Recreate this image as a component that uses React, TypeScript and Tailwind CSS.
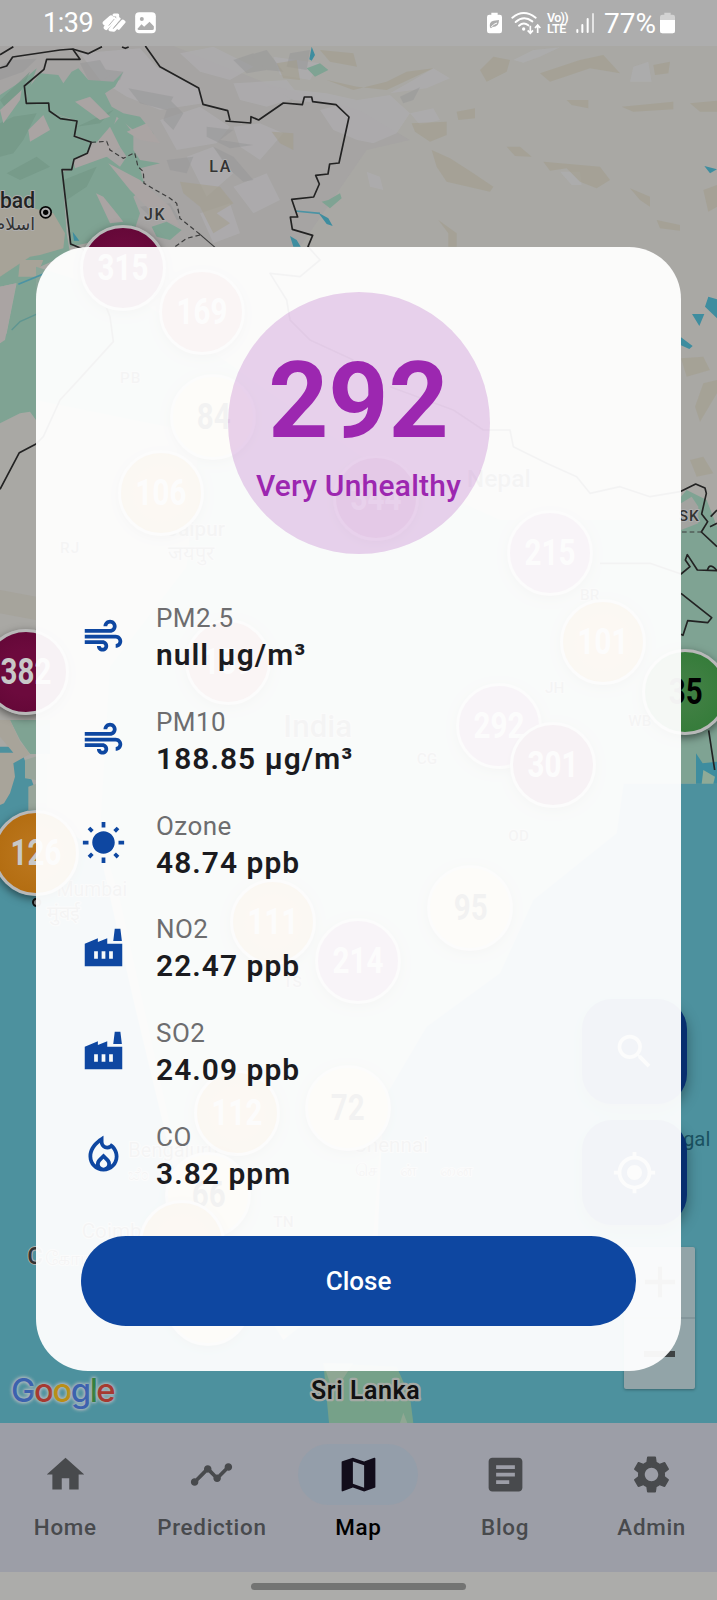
import React from "react";
import {
  MdHome, MdTimeline, MdMap, MdArticle, MdSettings, MdAir, MdWbSunny, MdFactory, MdSearch, MdMyLocation, MdAdd,
} from "react-icons/md";

type Pin = { x: number; y: number; value: string; tone: string };

const MAROON = "bg-[radial-gradient(circle,#6c0a3d_40%,#5f0634)] text-[#c8c8c8]";
const RED = "bg-[#9c3a3a] text-[#c8c8c8]";
const PURPLE = "bg-[#7c2a78] text-[#c8c8c8]";
const ORANGE = "bg-[radial-gradient(circle,#b9741a_30%,#b0690c)] text-[#c8c8c8]";
const YELLOW = "bg-[#d0bc82] text-black";
const GREEN = "bg-[radial-gradient(circle,#3f7f42_30%,#2f7a35)] text-black";

const pins: Pin[] = [
  { x: 122.7, y: 267.7, value: "315", tone: MAROON },
  { x: 202.3, y: 311.7, value: "169", tone: RED },
  { x: 213.3, y: 417, value: "84", tone: YELLOW },
  { x: 160.7, y: 493.3, value: "106", tone: ORANGE },
  { x: 376, y: 497.7, value: "344", tone: MAROON },
  { x: 550.3, y: 553.3, value: "215", tone: PURPLE },
  { x: 228.3, y: 661.7, value: "159", tone: RED },
  { x: 603, y: 641.7, value: "101", tone: ORANGE },
  { x: 26, y: 672, value: "382", tone: MAROON },
  { x: 499.3, y: 726, value: "292", tone: PURPLE },
  { x: 553, y: 765, value: "301", tone: MAROON },
  { x: 685.3, y: 692, value: "35", tone: GREEN },
  { x: 36, y: 853, value: "126", tone: ORANGE },
  { x: 470.3, y: 908.3, value: "95", tone: YELLOW },
  { x: 273.3, y: 921.7, value: "111", tone: ORANGE },
  { x: 358.3, y: 961, value: "214", tone: PURPLE },
  { x: 236.7, y: 1113.3, value: "112", tone: ORANGE },
  { x: 347.7, y: 1108, value: "72", tone: YELLOW },
  { x: 208.3, y: 1195, value: "66", tone: YELLOW },
  { x: 181.7, y: 1243, value: "", tone: ORANGE },
  { x: 208.3, y: 1303, value: "", tone: YELLOW },
];

function StatusBar() {
  return (
    <header className="flex h-[46px] shrink-0 items-center justify-between bg-[#adadad] pl-[43px] pr-[42px] text-white">
      <div className="flex items-center">
        <span className="w-[59px] pt-px text-[27px] leading-none tracking-[-0.5px]">1:39</span>
        <svg className="h-[22px] w-[24px]" viewBox="0 0 72 66" fill="none" stroke="#fff" strokeLinecap="round" strokeLinejoin="round">
          <path d="M9 33 27 17M12 47 36 22" strokeWidth="14" />
          <path d="M36 9 47 9 47 22 24 53 36 55 62 27 66 30 50 49" strokeWidth="9" />
          <path d="M30 46 52 20" strokeWidth="8" />
          <path d="M21 40 36 22" strokeWidth="2.5" stroke="#adadad" />
          <path d="M35 48 51 29" strokeWidth="2.5" stroke="#adadad" />
        </svg>
        <svg className="ml-[9px] h-[22px] w-[21px]" viewBox="0 0 62 66">
          <rect y="1" width="62" height="63" rx="12" fill="#fff" />
          <circle cx="20" cy="21" r="6" fill="#adadad" />
          <path d="M7 50 L19 37 L27 44 L43 29 L56 43 V50 Q56 54 51 54 H12 Q7 54 7 50Z" fill="#adadad" />
        </svg>
      </div>
      <div className="flex items-center">
        <svg className="h-[22px] w-[15px]" viewBox="0 0 45 66">
          <path d="M13 2h19v6h6q7 0 7 7v42q0 7-7 7H7q-7 0-7-7V15q0-7 7-7h6z" fill="#fff" />
          <path d="M9 47 Q5 29 20 26 L36 24 Q36 45 17 45 L12 49Z" fill="#adadad" />
          <path d="M12 46 Q20 35 30 33" stroke="#fff" strokeWidth="3" fill="none" />
        </svg>
        <svg className="ml-[9px] h-[24px] w-[31px]" viewBox="0 0 93 72" fill="none" stroke="#fff">
          <path d="M4 20 Q38 -8 74 20" strokeWidth="6" strokeLinecap="round" />
          <path d="M14 33 Q38 12 64 31" strokeWidth="6" strokeLinecap="round" />
          <path d="M24 44 Q38 32 52 43" strokeWidth="6" strokeLinecap="round" />
          <circle cx="38" cy="54" r="5" fill="#fff" stroke="none" />
          <path d="M58 44V66M50 58l8 9 8-9M80 66V42M72 51l8-9 8 9" strokeWidth="5" />
        </svg>
        <div className="ml-[5px] flex w-[22px] flex-col text-[12.5px] font-semibold leading-[11.5px]">
          <span className="whitespace-nowrap tracking-[-0.7px]">Vo))</span>
          <span className="tracking-[-0.4px]">LTE</span>
        </div>
        <svg className="ml-[7px] h-[22px] w-[19px]" viewBox="0 0 57 66" stroke="#fff" strokeWidth="6" strokeLinecap="round">
          <path d="M4 54V60M19 39V60M35 21V60" />
          <path d="M51 6V60" stroke="#e4e4e4" />
        </svg>
        <span className="ml-[9px] w-[56px] pt-px text-[28px] leading-none">77%</span>
        <svg className="h-[22px] w-[15px]" viewBox="0 0 45 66">
          <path d="M13 2h19v6h6q7 0 7 7v42q0 7-7 7H7q-7 0-7-7V15q0-7 7-7h6z" fill="#d2d2d2" />
          <path d="M0 24h45v33q0 7-7 7H7q-7 0-7-7z" fill="#fff" />
        </svg>
      </div>
    </header>
  );
}

function Terrain() {
  return (
    <svg className="absolute inset-0 h-full w-full" viewBox="0 138 2151 4131" preserveAspectRatio="none">
      <rect x="0" y="138" width="2151" height="4131" fill="#a9a8a4" />
      {/* high plateau greys */}
      <g fill="#a6a4a3">
        <path d="M0 138H520L800 250 1080 330 1230 420 1100 450 900 740H400L0 600Z" />
      </g>
      <g fill="#aeadaf" opacity=".75">
        <path d="M240 160 420 145 470 200 600 265 610 310 480 330 380 290 300 240Z" />
        <path d="M540 160 640 140 760 200 690 240 600 215ZM700 250 860 240 900 290 800 320 720 300Z" />
        <path d="M480 360 600 320 690 380 650 430 530 450ZM560 470 640 440 700 520 620 590ZM700 560 800 520 840 600 760 640Z" />
        <path d="M1071 300 1170 285 1230 340 1190 400 1120 430 1071 420 1000 390 960 330ZM1240 240 1300 205 1350 235 1280 265 1170 280ZM1230 340 1300 325 1320 360 1260 375Z" />
        <path d="M820 170 960 190 930 240 840 225ZM700 380 780 370 850 400 780 480 720 440ZM600 640 690 610 720 700 640 730Z" />
        <path d="M1900 200 1945 185 1955 245 1890 245ZM1680 515 1740 515 1745 555 1715 555ZM1100 515 1140 530 1150 570 1110 560ZM1540 180 1600 150 1680 142 1620 170 1570 188Z" />
        <path d="M800 260 980 280 1071 300 1040 320 880 300Z" />
      </g>
      <g fill="#989899" opacity=".55">
        <path d="M250 200 370 215 360 240 280 262ZM385 265 520 290 500 330 420 310ZM620 380 700 390 660 420 760 435 690 445 620 410Z" />
        <path d="M510 300 550 340 520 390 490 360ZM640 440 700 470 760 540 730 545 680 500ZM700 180 760 160 800 210 740 220ZM1200 290 1260 262 1240 300 1210 310Z" />
        <path d="M500 480 580 470 560 520 510 510ZM420 620 510 610 540 660 460 660ZM870 160 930 150 920 210 860 200ZM240 190 300 180 330 230 270 250Z" />
        <path d="M30 180 110 176 70 215 0 240V200ZM750 165 800 150 850 215 800 210Z" />
      </g>
      <g fill="#a39e8d" opacity=".6">
        <path d="M540 545 660 560 700 610 650 640 690 670 640 700 600 620 550 580ZM815 395 880 400 880 450 840 430ZM830 190 890 180 900 240 850 235Z" />
        <path d="M960 150 1060 160 1071 200 990 185ZM980 240 1071 260 1160 270 1300 205 1220 215 1160 245 1060 270Z" />
        <path d="M1440 210 1480 170 1530 180 1520 215 1460 245ZM1620 220 1740 180 1810 165 1860 220 1770 205 1650 245ZM1960 195 2010 185 2005 220 1965 225Z" />
        <path d="M1370 335 1425 325 1425 355 1375 360ZM1235 370 1340 365 1340 405 1290 425 1245 395ZM1700 300 1765 300 1765 325 1715 315ZM1865 320 2020 305 2020 328 1900 335ZM2070 310 2151 302V335H2100Z" />
        <path d="M1295 450 1350 475 1420 520 1480 560 1470 575 1340 545 1310 500ZM1520 440 1560 440 1595 470 1545 468ZM1630 485 1800 500 1830 540 1790 565 1740 545 1700 505 1650 512ZM1890 565 1950 590 1950 620 1920 600ZM1970 660 2040 675 2040 692 1980 685ZM1315 660 1370 700 1370 740H1345V700ZM2110 570 2151 555V620L2125 635Z" />
        <path d="M2043 1075 2110 1070 2130 1110 2060 1130ZM2110 1150 2151 1140V1180L2100 1265 2085 1220ZM2070 1380 2110 1370 2140 1420 2090 1430Z" />
      </g>
      {/* vegetation */}
      <g fill="#7fa393">
        <path d="M0 285 70 240 110 205 80 290 80 310 146 312 150 335 230 365 225 410 274 430 262 460 220 480 215 510 186 510 200 700 210 760 120 800 108 900V1260L90 1235 60 1240 0 1270V1030L20 1000 50 850 0 860V640L0 400Z" />
        <path d="M120 220 175 225 190 250 215 215 235 205 265 240 340 245 370 215 345 260 315 280 335 320 370 340 420 350 460 400 465 420 400 390 350 350 330 410 290 430 274 427 225 405 231 363 150 335 146 309 79 310 85 265Z" />
        <path d="M320 400 360 350 400 400 400 450 420 480 480 490 420 505 435 560 400 590 420 640 400 700 210 740 186 515 215 509 225 480 320 470 360 500 380 470 360 440Z" />
        <path d="M455 680 500 665 545 690 510 720 470 710ZM920 205 960 190 985 210 945 230ZM965 605 985 600 1020 580 1025 595 990 625Z" />
      </g>
      <g fill="#749786" opacity=".7">
        <path d="M0 370 40 350 110 340 70 420 40 460 0 470ZM190 540 290 500 260 560 200 600ZM20 520 110 470 150 500 60 540ZM230 380 340 330 300 370ZM0 300 90 215 70 260 20 330Z" />
      </g>
      <g fill="#aaa4a3">
        <path d="M85 390 130 345 150 390 90 425ZM225 305 270 290 330 350 300 360ZM0 330 65 270 60 300 10 370ZM325 490 420 540 510 620 540 680 470 650 390 570ZM288 580 310 590 350 640 370 665 330 670ZM220 480 262 460 330 380 360 440 320 470 225 505Z" />
        <path d="M380 395 440 370 480 430 420 420Z" />
      </g>
      <path d="M0 600 160 640 195 700 190 745 120 765 90 770 0 830Z" fill="#a7a398" />
      <path d="M60 780 130 780 110 830 55 830Z" fill="#a7a398" />
      <path d="M0 860 48 850 15 1020 0 1030Z" fill="#aaa4a3" />
      {/* southern plains beneath the dialog */}
      <path d="M108 800 420 900 700 1100 1100 1380 1500 1560 2043 1560V2351H1871L1850 2500 1600 2700 1500 2920 1280 3080 1150 3300 1120 3700 900 4020 780 3980 560 3600 360 2700 300 2500 330 2000 560 1700 600 1300 108 1200Z" fill="#8aa598" />
      <path d="M2043 1490 2060 1470 2120 1500 2151 1580V2351H2043Z" fill="#7fa393" />
      <path d="M2043 1510 2075 1490 2095 1520 2095 1570 2043 1590Z" fill="#a3a3a0" />
      {/* water */}
      <path d="M0 2240H60L130 2440 300 2560 400 3000 520 3500 850 4020 1130 3800 1150 3300 1280 3080 1500 2920 1600 2700 1850 2500 1871 2351H2151V4269H0Z" fill="#4d919e" />
      <path d="M30 2160H150V2262H90L60 2220Z" fill="#7fa393" />
      <path d="M0 2160H30L60 2225 90 2262 40 2290 45 2330 30 2380 12 2410 0 2415V2258H40L0 2210Z" fill="#a8a49a" />
      <path d="M75 2280 140 2260V2345L75 2335ZM85 2360 140 2340V2430H85Z" fill="#98a59a" />
      <path d="M0 1770V1840L108 1860V1790Z" fill="#a39f93" opacity=".5" />
      <path d="M2088 2260 2108 2290 2151 2285V2351H2088ZM2115 920 2125 890 2151 898V955ZM2076 942 2113 942 2098 978ZM2043 1012 2078 1038 2068 1047 2043 1036ZM2113 498 2151 508 2130 520ZM935 140 945 165 935 182 928 178ZM955 638 985 655 998 678 980 672ZM870 708 890 720 902 740H880ZM218 695 238 722H222Z" fill="#3e8d9f" />
      <path d="M2110 2310 2145 2330 2140 2351H2105Z" fill="#8faa97" />
      <path d="M55 853 130 822M885 633 960 640" stroke="#4b93a4" strokeWidth="5" fill="none" />
      <path d="M35 990 60 965 120 938" stroke="#5f9691" strokeWidth="4" fill="none" />
      <path d="M970 4090 1190 4100 1230 4190 1240 4269H987Z" fill="#76a189" />
      <path d="M970 4090 1060 4090 1000 4180Z" fill="#8fa793" />
      <path d="M1200 4269 1210 4238 1222 4269Z" fill="#8fa793" />
      {/* borders */}
      <g fill="none" stroke="#222" strokeWidth="5" strokeLinejoin="round">
        <path d="M0 204 20 198 38 171 180 150 218 147 240 178 140 178 132 208 73 258 79 310 146 309 148 333 181 356 231 363 223 409 274 427 262 460 222 478 215 509 186 509 212 732 250 748 330 950 340 1025 240 1135 180 1200 130 1310 108 1332 58 1358 0 1468" />
        <path d="M0 164 40 140M218 147 264 161 306 140M366 141 376 145 386 141M436 138 480 200 596 264 609 313 683 332 690 361M676 363 752 369 753 350 776 360 850 309 907 314 913 291 935 291 938 305 1008 314 1047 351 1017 489 989 492 984 522 947 526 958 552 941 591 875 598 893 651 871 651 877 688 938 706 924 740 960 780 900 830 810 820 860 900 870 960 930 1020 1060 1080" />
        <path d="M1170 1160 1360 1230 1450 1290 1530 1290 1540 1340 1640 1390 1730 1430 1770 1480 1860 1460 1950 1490 2040 1475 2087 1452 2115 1464 2119 1480 2105 1542 2123 1565 2104 1596 2151 1640M1800 1690 1950 1690 2043 1722 2070 1700 2056 1680 2062 1664 2092 1710 2151 1712" />
        <path d="M2043 1780 2135 1853 2123 1868 2063 1862 2049 1906 2043 1903M2126 2191 2144 2310M2151 1530 2132 1550M2130 1580 2151 1570" />
        <path d="M2122 1712Q2128 1685 2151 1712" />
      </g>
      <g fill="none" stroke="#3c3c3c" strokeWidth="3.5" strokeDasharray="14 9">
        <path d="M274 427 320 424 330 450 370 475 404 458 414 500 430 515 432 550 510 595 530 610 540 655 600 703M600 705 560 715 525 740M2046 1596H2104" />
        <path d="M600 703 645 742" strokeDasharray="none" />
      </g>
      {/* place names */}
      <g fontFamily="Roboto, sans-serif" fontWeight="500" fill="#333" stroke="#aeaeae" strokeWidth="6" paintOrder="stroke" strokeLinejoin="round">
        <text x="628" y="516" fontSize="48" letterSpacing="5">LA</text>
        <text x="432" y="659" fontSize="48" letterSpacing="5">JK</text>
        <text x="0" y="623" fontSize="64" textLength="105" lengthAdjust="spacingAndGlyphs" fill="#222">bad</text>
        <text x="105" y="690" fontSize="52" fontWeight="400" fontFamily="'DejaVu Sans', sans-serif" direction="rtl">اسلام</text>
        <text x="2036" y="1564" fontSize="46" letterSpacing="3">SK</text>
        <text x="360" y="1150" fontSize="46" letterSpacing="3">PB</text>
        <text x="180" y="1658" fontSize="46" letterSpacing="3">RJ</text>
        <text x="500" y="1608" fontSize="62">Jaipur</text>
        <text x="505" y="1680" fontSize="60" fontWeight="400">जयपुर</text>
        <text x="1400" y="1460" fontSize="74">Nepal</text>
        <text x="850" y="2210" fontSize="94">India</text>
        <text x="1740" y="1800" fontSize="46">BR</text>
        <text x="1635" y="2080" fontSize="46">JH</text>
        <text x="1250" y="2292" fontSize="46">CG</text>
        <text x="1885" y="2178" fontSize="46">WB</text>
        <text x="1525" y="2524" fontSize="46">OD</text>
        <text x="170" y="2688" fontSize="58" fontWeight="400">Mumbai</text>
        <text x="140" y="2760" fontSize="60" fontWeight="400">मुंबई</text>
        <text x="385" y="3470" fontSize="60" fontWeight="400">Bengaluru</text>
        <text x="385" y="3540" fontSize="50" fontWeight="400">ಬೆಂ</text>
        <text x="1060" y="3456" fontSize="62" fontWeight="400">Chennai</text>
        <text x="1065" y="3528" fontSize="52" fontWeight="400" textLength="350">சென்னை</text>
        <text x="245" y="3715" fontSize="62" fontWeight="400">Coimbatore</text>
        <text x="850" y="2960" fontSize="46">TS</text>
        <text x="820" y="3682" fontSize="46">TN</text>
        <text x="82" y="3792" fontSize="72" fontWeight="500">C</text>
        <text x="135" y="3795" fontSize="56" fontWeight="400">கோயம்</text>
      </g>
      <circle cx="137" cy="637" r="16.5" fill="#aeaeae" stroke="#050505" strokeWidth="5" />
      <circle cx="137" cy="637" r="8" fill="#050505" />
      <circle cx="110" cy="2707" r="11" fill="#888" stroke="#111" strokeWidth="6" />
      <text x="2131" y="3438" textAnchor="end" fontFamily="Roboto, sans-serif" fontSize="61" fill="#1a5161">Bengal</text>
      <text x="933" y="4197" fontFamily="Roboto, sans-serif" fontWeight="600" fontSize="75" fill="#111" stroke="#a5aaa5" strokeWidth="14" paintOrder="stroke" strokeLinejoin="round" textLength="326">Sri Lanka</text>
    </svg>
  );
}

function GoogleMark() {
  return (
    <div className="absolute bottom-[11px] left-[11px] font-['Inter',sans-serif] text-[33px] font-medium leading-[44px] tracking-[-1.6px] text-[#3c62ae] [text-shadow:0_0_2px_#a6b6bb,0_0_3px_#a6b6bb,0_0_4px_#a6b6bb,0_0_4px_#a6b6bb]">
      G<span className="text-[#a63a31]">o</span><span className="text-[#b98e17]">o</span>g<span className="text-[#34803f]">l</span><span className="text-[#a63a31]">e</span>
    </div>
  );
}

function MapView() {
  return (
    <main className="relative h-[1377px] shrink-0 overflow-hidden">
      <Terrain />
      <GoogleMark />
      {pins.map((p, i) => (
        <div
          key={i}
          className={`absolute flex size-[86px] -translate-x-1/2 -translate-y-1/2 items-center justify-center rounded-full border-[3px] border-[#b8b8b8] text-[36px] font-bold leading-none shadow-[0_3px_8px_rgba(0,0,0,0.5)] ${p.tone}`}
          style={{ left: p.x, top: p.y - 46 }}
        >
          <span className="scale-x-[0.82]">{p.value}</span>
        </div>
      ))}
      <div className="absolute left-[582px] top-[953px] flex flex-col gap-4">
        {[MdSearch, MdMyLocation].map((Icon, i) => (
          <div key={i} className="flex size-[105px] items-center justify-center rounded-[30px] bg-[#082f6f] text-[#bcbcbc] shadow-[0_6px_14px_rgba(0,0,0,0.35)]">
            <Icon size={45} />
          </div>
        ))}
      </div>
      <div className="absolute left-[624px] top-[1201px] flex h-[142px] w-[71px] flex-col divide-y-2 divide-[#84969b] rounded-[2px] bg-[#92a4a8] text-[#3d4243] shadow-[0_1px_3px_rgba(0,0,0,0.3)]">
        <div className="flex flex-1 items-center justify-center"><MdAdd size={52} /></div>
        <div className="flex flex-1 items-center justify-center">
          <div className="h-[6px] w-[31px] bg-current" />
        </div>
      </div>
    </main>
  );
}

const tabs = [
  { label: "Home", Icon: MdHome },
  { label: "Prediction", Icon: MdTimeline },
  { label: "Map", Icon: MdMap, active: true },
  { label: "Blog", Icon: MdArticle },
  { label: "Admin", Icon: MdSettings },
];

function BottomNav() {
  return (
    <nav className="flex h-[149px] shrink-0 bg-[#9c9ea7] pt-[21px]">
      <div className="-ml-[8px] -mr-[8px] flex flex-1">
        {tabs.map(({ label, Icon, active }) => (
          <div key={label} className={`flex flex-1 flex-col items-center ${active ? "text-black" : "text-[#484a4d]"}`}>
            <div className={`flex h-[61px] w-[120px] items-center justify-center rounded-full ${active ? "bg-[#949eaa] text-[#120d1b]" : ""}`}>
              <Icon size={45} />
            </div>
            <span className="mt-[7px] text-[22.4px] font-medium leading-[30px] tracking-[0.7px]">{label}</span>
          </div>
        ))}
      </div>
    </nav>
  );
}

function FlameIcon() {
  return (
    <svg width="45" height="45" viewBox="0 0 24 24" fill="currentColor">
      <path d="M16 6l-.44.55C14.38 8.02 12 7.19 12 5.3V2S4 6 4 13c0 4.42 3.58 8 8 8s8-3.58 8-8c0-2.96-1.61-5.62-4-7zm-4 13c-1.1 0-2-.87-2-1.94 0-.51.2-.99.58-1.36L12 14.3l1.43 1.4c.37.37.57.85.57 1.36 0 1.07-.9 1.94-2 1.94zm3.96-1.5c.04-.36.22-1.89-1.13-3.22L12 11.5l-2.83 2.78c-1.36 1.34-1.17 2.88-1.13 3.22C6.79 16.4 6 14.79 6 13c0-3.16 2.13-5.65 4.03-7.25.23 1.99 1.93 3.55 3.99 3.55.78 0 1.54-.23 2.18-.66C17.34 9.78 18 11.35 18 13c0 1.79-.79 3.4-2.04 4.5z" />
    </svg>
  );
}

const readings: { name: string; value: string; icon: React.ReactNode }[] = [
  { name: "PM2.5", value: "null µg/m³", icon: <MdAir size={45} /> },
  { name: "PM10", value: "188.85 µg/m³", icon: <MdAir size={45} /> },
  { name: "Ozone", value: "48.74 ppb", icon: <MdWbSunny size={45} /> },
  { name: "NO2", value: "22.47 ppb", icon: <MdFactory size={45} /> },
  { name: "SO2", value: "24.09 ppb", icon: <MdFactory size={45} /> },
  { name: "CO", value: "3.82 ppm", icon: <FlameIcon /> },
];

function AirQualityDialog() {
  return (
    <section className="absolute left-[36px] top-[247px] flex h-[1124px] w-[645px] flex-col items-center rounded-[52px] bg-white/95 px-[45px] pt-[45px]">
      <div className="flex size-[262px] shrink-0 flex-col items-center rounded-full bg-[#9c27b0]/20 pt-[48px] text-[#9c27b0]">
        <span className="text-[105px] font-bold leading-[123px]">292</span>
        <span className="mt-[3px] whitespace-nowrap text-[29.9px] font-medium leading-[40px] tracking-[0.28px]">Very Unhealthy</span>
      </div>
      <ul className="mt-[31.4px] w-full">
        {readings.map((r) => (
          <li key={r.name} className="flex h-[103.7px] items-center gap-[30px]">
            <span className="mb-[2px] text-[#0e47a1]">{r.icon}</span>
            <div className="flex flex-col whitespace-nowrap">
              <span className="text-[26px] leading-[36px] tracking-[0.46px] text-[#6d6d6f]">{r.name}</span>
              <span className="text-[29.9px] font-semibold leading-[38px] tracking-[1.05px] text-[#1b1b1f]">{r.value}</span>
            </div>
          </li>
        ))}
      </ul>
      <button className="mb-[45px] mt-auto h-[90px] w-full shrink-0 rounded-full bg-[#0e47a1] text-[26px] font-medium text-white">Close</button>
    </section>
  );
}

export default function App() {
  return (
    <div className="relative flex h-[1600px] w-[717px] flex-col overflow-hidden font-['Roboto',sans-serif]">
      <StatusBar />
      <MapView />
      <BottomNav />
      <footer className="flex h-[28px] shrink-0 items-center justify-center bg-[#acacaa]">
        <div className="mt-[1px] h-[7px] w-[215px] rounded-full bg-[#737473]" />
      </footer>
      <AirQualityDialog />
    </div>
  );
}
